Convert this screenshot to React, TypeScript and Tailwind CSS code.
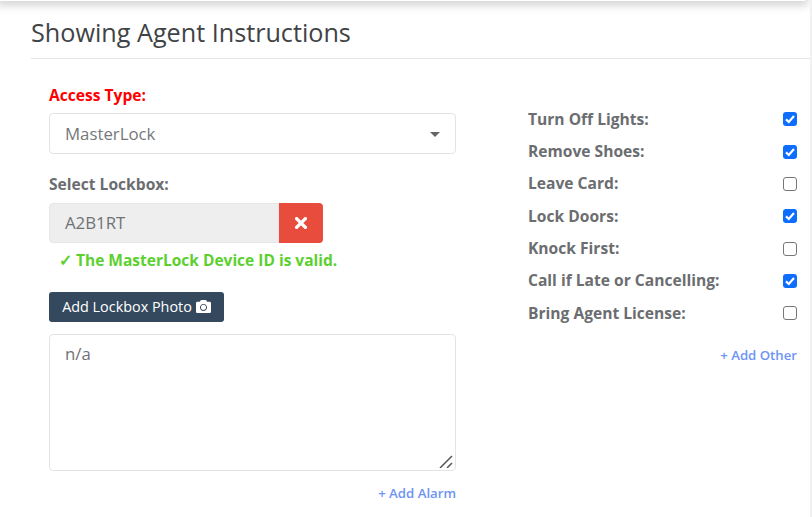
import React from "react";
import { FaCamera } from "react-icons/fa";

const items: [string, boolean][] = [
  ["Turn Off Lights:", true],
  ["Remove Shoes:", true],
  ["Leave Card:", false],
  ["Lock Doors:", true],
  ["Knock First:", false],
  ["Call if Late or Cancelling:", true],
  ["Bring Agent License:", false],
];

function Check({ on }: { on: boolean }) {
  return on ? (
    <span className="flex h-[14px] w-[14px] items-center justify-center rounded-[3px] bg-[#0d6efd]">
      <svg viewBox="0 0 14 14" className="h-[14px] w-[14px]">
        <path d="M3 7.4 L5.8 10 L11 4" fill="none" stroke="#fff" strokeWidth="2.2" />
      </svg>
    </span>
  ) : (
    <span className="h-[14px] w-[14px] rounded-[3px] border border-[#767676] bg-white" />
  );
}

export default function App() {
  return (
    <div className="relative h-[517px] w-[812px] overflow-hidden bg-white font-['Open_Sans',sans-serif] text-[#6b6d70]">
      <div className="absolute left-0 top-0 h-px w-[805px] shadow-[0_0_10px_3px_rgba(0,0,0,0.25)]" />
      <div className="absolute right-0 top-0 h-full w-[2px] bg-[#f1f1f1]" />
      <div className="ml-[31px] mr-[2px] flex h-[59px] items-end border-b border-[#e5e5e5] pb-[10px]">
        <h1 className="text-[25.2px] leading-[32px] text-[#3f4346]">Showing Agent Instructions</h1>
      </div>
      <div className="flex">
        <div className="ml-[49px] w-[407px]">
          <div className="mt-[26px] text-[15.6px] font-bold leading-[20px] text-[#ff0000]">Access Type:</div>
          <div className="mt-[8px] flex h-[41px] items-center justify-between rounded-[4px] border border-[#e3e3e3] pl-[15px] pr-[15px] text-[16.8px] text-[#75787b]">
            <span>MasterLock</span>
            <span className="mt-[1px] h-0 w-0 border-x-[5px] border-t-[5px] border-x-transparent border-t-[#666]" />
          </div>
          <div className="mt-[20px] text-[15.6px] font-bold leading-[20px]">Select Lockbox:</div>
          <div className="mt-[9px] flex h-[40px] w-[274px]">
            <div className="flex w-[230px] items-center rounded-l-[4px] border border-[#e6e6e6] bg-[#eeeeee] pl-[15px] text-[16.8px] text-[#6f7275]">A2B1RT</div>
            <div className="flex w-[44px] items-center justify-center rounded-r-[4px] bg-[#e74c3c] text-white">
              <svg viewBox="0 0 12 12" className="h-[12px] w-[12px]">
                <path d="M1.6 1.6 L10.4 10.4 M10.4 1.6 L1.6 10.4" stroke="#fff" strokeWidth="3.4" strokeLinecap="round" fill="none" />
              </svg>
            </div>
          </div>
          <div className="mt-[7px] pl-[10px] text-[15.5px] font-bold leading-[20px] text-[#5cd02e]">✓ The MasterLock Device ID is valid.</div>
          <div className="mt-[22px] flex h-[30px] w-[175px] items-center justify-center gap-[4px] rounded-[3px] bg-[#34495e] pb-[1px] text-[14.4px] text-white">
            Add Lockbox Photo <FaCamera className="text-[15px]" />
          </div>
          <div className="relative mt-[12px] h-[137px] rounded-[4px] border border-[#e3e3e3] pl-[15px] pt-[7px] text-[16.8px] leading-[24px] text-[#6f7275]">
            n/a
            <svg viewBox="0 0 14 14" className="absolute bottom-[2px] right-[2px] h-[14px] w-[14px]">
              <path d="M1 14 L13 2 M8 14 L13 9" stroke="#555" strokeWidth="1.5" fill="none" />
            </svg>
          </div>
          <div className="mt-[13px] text-right text-[13.2px] font-semibold leading-[18px] text-[#6d94f5]">+ Add Alarm</div>
        </div>
        <div className="ml-[72px] mt-[50.4px] w-[269px]">
          <div className="flex flex-col gap-[12.33px]">
            {items.map(([t, on]) => (
              <div key={t} className="flex h-[20px] items-center justify-between text-[15.6px] font-bold">
                <span>{t}</span>
                <Check on={on} />
              </div>
            ))}
          </div>
          <div className="mt-[23px] text-right text-[13.2px] font-semibold leading-[18px] text-[#6d94f5]">+ Add Other</div>
        </div>
      </div>
    </div>
  );
}
